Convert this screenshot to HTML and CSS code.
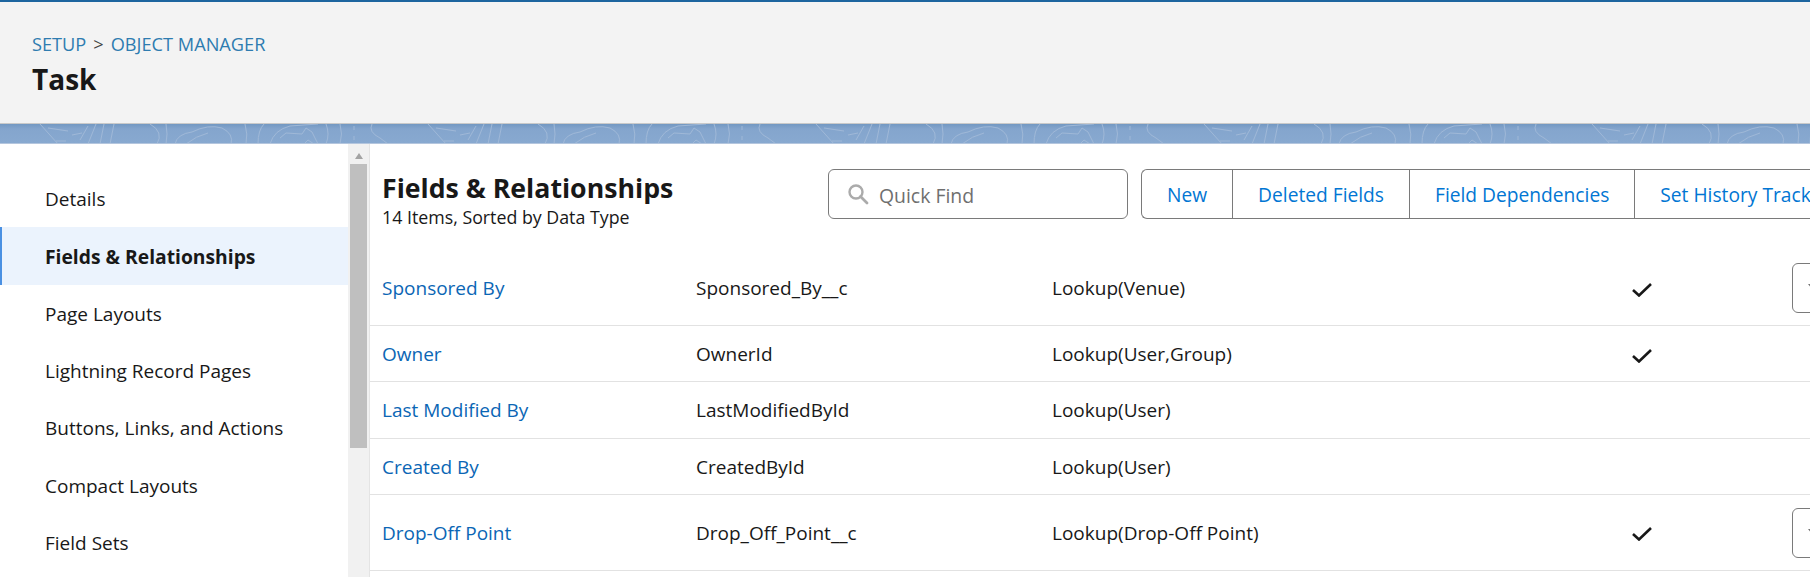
FILE: index.html
```html
<!DOCTYPE html>
<html lang="en">
<head>
<meta charset="UTF-8" />
<title>Task | Object Manager</title>
<link rel="stylesheet" href="styles.css">
</head>
<body>

<header class="pagehead">
	<p class="crumbs"><a href="#">SETUP</a><span class="sep">&gt;</span><a href="#">OBJECT MANAGER</a></p>
	<h1>Task</h1>
</header>

<svg class="band" width="100%" height="20" aria-hidden="true">
	<defs>
		<pattern id="contours" width="388" height="20" patternUnits="userSpaceOnUse">
			<g fill="none" stroke="#9fb8d7" stroke-width="1">
				<path d="M40 0 L58 20 M48 4 L68 7 M72 11 L82 9 M56 17 L66 17 M88 2 L80 16 M96 0 L88 20 M104 0 L100 20 M114 0 L110 20"/>
				<path d="M150 0 Q164 8 157 20 M166 0 Q168 10 166 20 M175 20 Q177 10 192 8 Q208 0 222 4 Q234 10 231 20 M186 20 Q196 12 208 9"/>
				<path d="M245 0 Q248 10 246 20 M264 0 Q258 6 258 20 M270 20 Q274 6 290 2 L318 0 M280 14 L286 9 L302 10 L306 4 L312 8 L318 20 M304 20 L308 16 L314 20 M326 0 Q330 10 326 20 M340 0 Q343 10 340 20"/>
				<path d="M354 2 V6 M354 12 V16 M372 0 Q368 8 380 14 L388 20"/>
			</g>
		</pattern>
	</defs>
	<rect width="100%" height="20" fill="url(#contours)"/>
</svg>

<div class="workspace">
	<nav class="sidenav">
		<a href="#">Details</a>
		<a href="#" class="current">Fields &amp; Relationships</a>
		<a href="#">Page Layouts</a>
		<a href="#">Lightning Record Pages</a>
		<a href="#">Buttons, Links, and Actions</a>
		<a href="#">Compact Layouts</a>
		<a href="#">Field Sets</a>
	</nav>

	<div class="scrollbar">
		<span class="arrow"></span>
		<span class="thumb"></span>
	</div>

	<main class="fields">
		<div class="fieldshead">
			<div class="fieldstitle">
				<h2>Fields &amp; Relationships</h2>
				<p>14 Items, Sorted by Data Type</p>
			</div>
			<label class="quickfind">
				<svg width="22" height="22" viewBox="0 0 22 22" aria-hidden="true"><circle cx="9" cy="9" r="6.5" fill="none" stroke="#ababab" stroke-width="2.4"/><path d="M13.5 13.5 L20 20" stroke="#ababab" stroke-width="2.8" stroke-linecap="round"/></svg>
				<input type="text" placeholder="Quick Find"/>
			</label>
			<div class="btngroup">
				<a href="#">New</a>
				<a href="#">Deleted Fields</a>
				<a href="#">Field Dependencies</a>
				<a href="#">Set History Tracking</a>
			</div>
		</div>

		<div class="row tall">
			<a href="#" class="c-label">Sponsored By</a>
			<span class="c-api">Sponsored_By__c</span>
			<span class="c-type">Lookup(Venue)</span>
			<span class="c-check"><svg width="20" height="14" viewBox="0 0 20 14"><path d="M1 7 L7 12.5 L19 1" fill="none" stroke="#181818" stroke-width="2.6"/></svg></span>
			<span class="menubtn"></span>
		</div>
		<div class="row">
			<a href="#" class="c-label">Owner</a>
			<span class="c-api">OwnerId</span>
			<span class="c-type">Lookup(User,Group)</span>
			<span class="c-check"><svg width="20" height="14" viewBox="0 0 20 14"><path d="M1 7 L7 12.5 L19 1" fill="none" stroke="#181818" stroke-width="2.6"/></svg></span>
		</div>
		<div class="row">
			<a href="#" class="c-label">Last Modified By</a>
			<span class="c-api">LastModifiedById</span>
			<span class="c-type">Lookup(User)</span>
		</div>
		<div class="row">
			<a href="#" class="c-label">Created By</a>
			<span class="c-api">CreatedById</span>
			<span class="c-type">Lookup(User)</span>
		</div>
		<div class="row tall">
			<a href="#" class="c-label">Drop-Off Point</a>
			<span class="c-api">Drop_Off_Point__c</span>
			<span class="c-type">Lookup(Drop-Off Point)</span>
			<span class="c-check"><svg width="20" height="14" viewBox="0 0 20 14"><path d="M1 7 L7 12.5 L19 1" fill="none" stroke="#181818" stroke-width="2.6"/></svg></span>
			<span class="menubtn"></span>
		</div>
	</main>
</div>

</body>
</html>
```

FILE: styles.css
```css
* {
	margin: 0;
	padding: 0;
	box-sizing: border-box;
}

html, body {
	height: 577px;
	overflow: hidden;
}

body {
	font: 19px "Open Sans", "Noto Sans", sans-serif;
	color: #181818;
	background: #fff;
}

a {
	color: #0b66b5;
	text-decoration: none;
}

.pagehead {
	height: 124px;
	padding: 30px 32px 0;
	background: #f3f3f3;
	border-top: 2px solid #1c659f;
	border-bottom: 1px solid #c9c9c9;
}

.crumbs {
	font-size: 18.2px;
	line-height: 24px;
	color: #444;
}

.crumbs a {
	color: #2e7cb0;
}

.crumbs .sep {
	margin: 0 7px;
}

h1 {
	margin-top: 5px;
	font-size: 28px;
	line-height: 36px;
	font-weight: 700;
}

.band {
	display: block;
	height: 20px;
	background: linear-gradient(#7398c2, #84a5cd 5px, #88a9d0);
	border-bottom: 1px solid #b4c6de;
}

.workspace {
	display: flex;
	height: 433px;
}

.sidenav {
	flex: 0 0 348px;
	padding-top: 26px;
}

.sidenav a {
	display: flex;
	align-items: center;
	height: 57.3px;
	padding: 1px 0 0 45px;
	color: #181818;
}

.sidenav a.current {
	padding-left: 43px;
	font-size: 19.3px;
	font-weight: 700;
	background: #ebf3fd;
	border-left: 2px solid #4a90e2;
}

.scrollbar {
	flex: 0 0 22px;
	padding: 0 2px;
	background: #f1f1f1;
	border-right: 1px solid #e4e4e4;
}

.arrow {
	display: block;
	width: 0;
	margin: 9px auto 0;
	border: 4.5px solid transparent;
	border-top: 0;
	border-bottom: 6px solid #a3a3a3;
}

.thumb {
	display: block;
	width: 17px;
	height: 284px;
	margin-top: 5px;
	background: #bfbfbf;
}

.fields {
	flex: 1;
	min-width: 0;
	overflow: hidden;
}

.fieldshead {
	display: flex;
	align-items: flex-start;
	height: 106px;
	padding: 25px 0 0 12px;
}

.fieldstitle {
	flex: 0 0 446px;
	margin-top: 2px;
}

.fieldstitle h2 {
	font-size: 26.7px;
	line-height: 34px;
	font-weight: 700;
	white-space: nowrap;
}

.fieldstitle p {
	font-size: 17.8px;
	line-height: 24px;
}

.quickfind {
	flex: 0 0 300px;
	display: flex;
	align-items: center;
	gap: 10px;
	height: 50px;
	padding-left: 18px;
	border: 1px solid #7a7a7a;
	border-radius: 6px;
}

.quickfind input {
	width: 230px;
	border: none;
	outline: none;
	font: inherit;
	font-size: 19.4px;
	padding-top: 2px;
}

.quickfind input::placeholder {
	color: #6f6f6f;
}

.btngroup {
	flex: none;
	display: flex;
	height: 50px;
	margin-left: 13px;
	border: 1px solid #7a7a7a;
	border-right: none;
	border-radius: 6px 0 0 6px;
}

.btngroup a {
	display: flex;
	align-items: center;
	padding: 0 25px;
	font-size: 19.2px;
	color: #0176d3;
	white-space: nowrap;
	border-left: 1px solid #7a7a7a;
}

.btngroup a:first-child {
	border-left: none;
}

.row {
	display: flex;
	align-items: center;
	height: 56.33px;
	padding: 1px 0 0 12px;
	border-bottom: 1px solid #e2e2e2;
}

.row.tall {
	height: 76px;
}

.c-label {
	flex: 0 0 314px;
}

.c-api {
	flex: 0 0 356px;
}

.c-type {
	flex: 0 0 580px;
}

.c-check {
	flex: 0 0 160px;
	display: flex;
	margin-top: 3px;
}

.menubtn {
	flex: none;
	width: 40px;
	height: 50px;
	padding: 20px 0 0 15px;
	border: 1px solid #7a7a7a;
	border-radius: 6px;
}

.menubtn::before {
	content: "";
	display: block;
	width: 0;
	border: 5px solid transparent;
	border-top: 6px solid #747474;
	border-bottom: 0;
}
```
